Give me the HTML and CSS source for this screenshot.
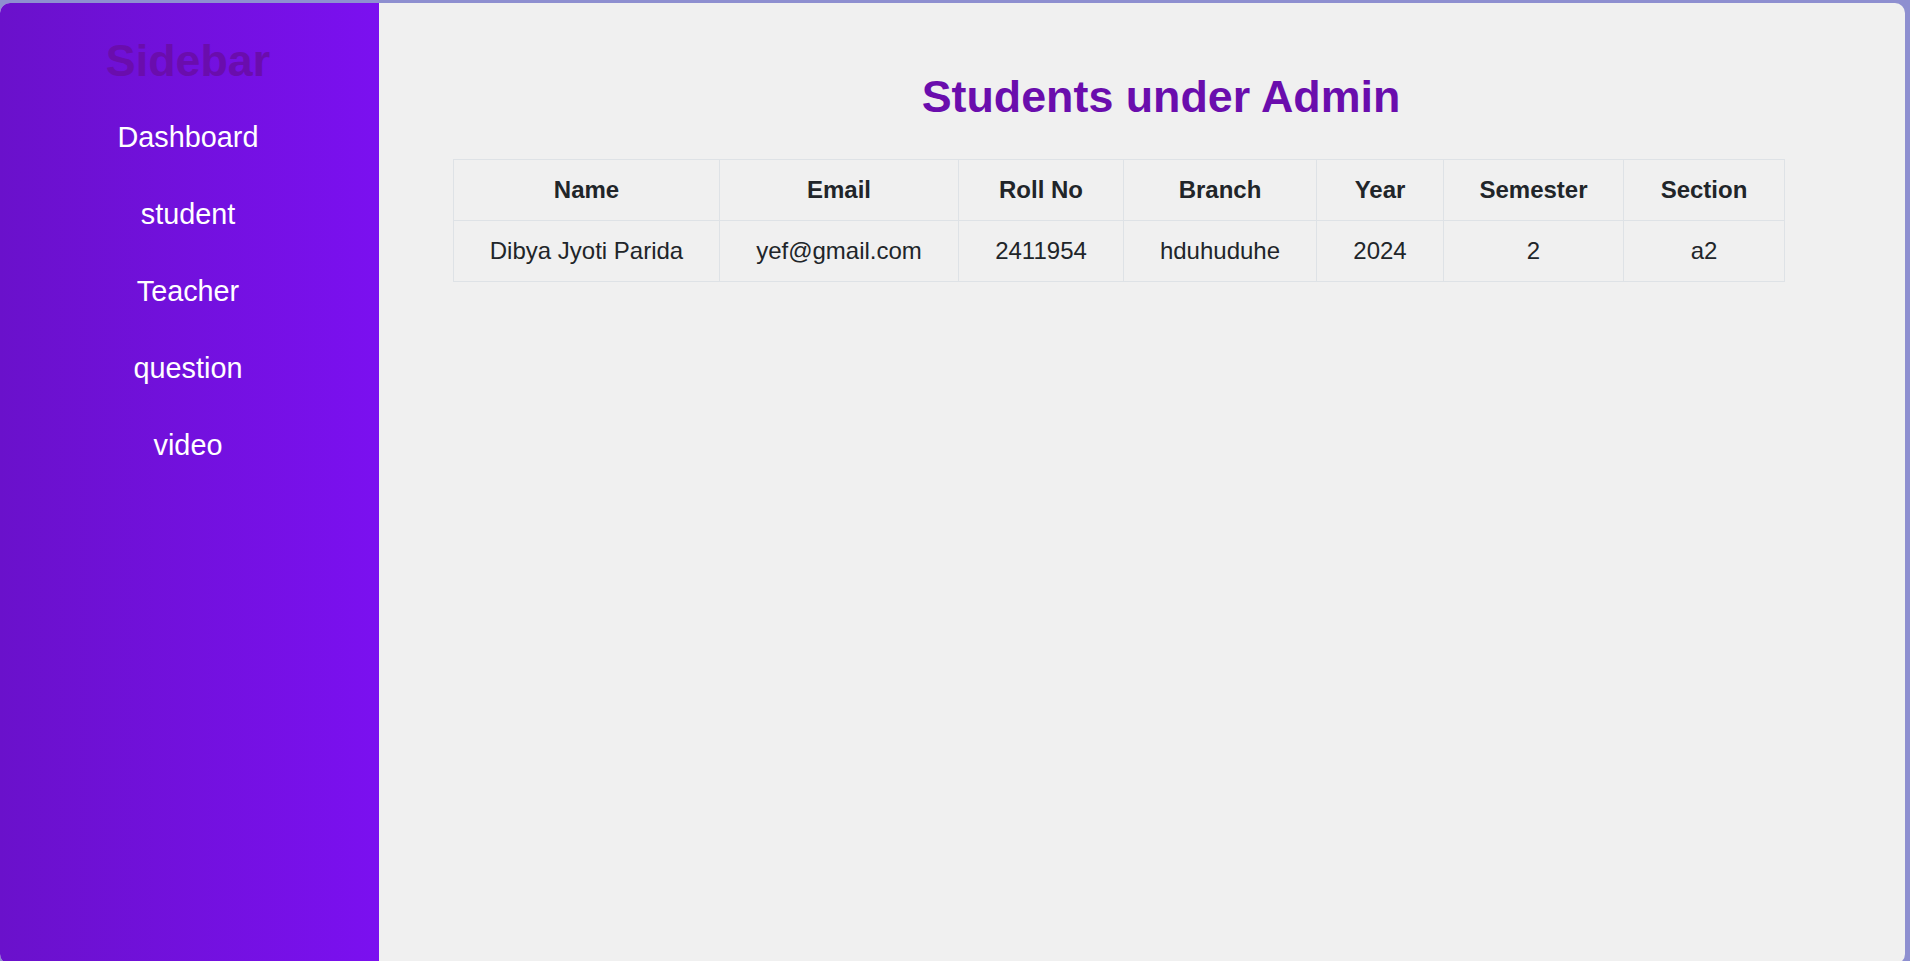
FILE: index.html
```html
<!DOCTYPE html>
<html lang="en">
<head>
<meta charset="utf-8">
<title>Students under Admin</title>
<link rel="stylesheet" href="styles.css">
</head>
<body>
<div class="app">
  <aside class="sidebar">
    <h2 class="sidebar-title">Sidebar</h2>
    <nav class="nav">
      <a class="nav-link" href="#">Dashboard</a>
      <a class="nav-link" href="#">student</a>
      <a class="nav-link" href="#">Teacher</a>
      <a class="nav-link" href="#">question</a>
      <a class="nav-link" href="#">video</a>
    </nav>
  </aside>
  <main class="main">
    <h1 class="page-title">Students under Admin</h1>
    <table class="students">
      <thead>
        <tr>
          <th class="c-name">Name</th>
          <th class="c-email">Email</th>
          <th class="c-roll">Roll No</th>
          <th class="c-branch">Branch</th>
          <th class="c-year">Year</th>
          <th class="c-sem">Semester</th>
          <th class="c-sec">Section</th>
        </tr>
      </thead>
      <tbody>
        <tr>
          <td>Dibya Jyoti Parida</td>
          <td>yef@gmail.com</td>
          <td>2411954</td>
          <td>hduhuduhe</td>
          <td>2024</td>
          <td>2</td>
          <td>a2</td>
        </tr>
      </tbody>
    </table>
  </main>
</div>
</body>
</html>
```

FILE: styles.css
```css
html, body {
  margin: 0;
  padding: 0;
  height: 100%;
}

body {
  background: #8e8fd0;
  font-family: "Liberation Sans", Arial, sans-serif;
  overflow: hidden;
}

.app {
  display: flex;
  margin: 3px 5px 0 0;
  height: 961px;
  border-radius: 10px;
  overflow: hidden;
  background: #f0f0f0;
}

.sidebar {
  width: 379px;
  flex: 0 0 379px;
  background: linear-gradient(to right, #6a11cb, #7b10f0);
  padding: 31px 3px 0 0;
  text-align: center;
  box-sizing: border-box;
}

.sidebar-title {
  margin: 0;
  font-size: 44.8px;
  line-height: 52px;
  font-weight: bold;
  color: #6a0dad;
}

.nav {
  margin-top: 13px;
  display: flex;
  flex-direction: column;
}

.nav-link {
  display: block;
  color: #ffffff;
  text-decoration: none;
  font-size: 28.8px;
  line-height: 33px;
  padding: 22px 0;
}

.main {
  flex: 1;
  min-width: 0;
  padding: 67px 36px 0 74px;
  box-sizing: border-box;
}

.page-title {
  margin: 0;
  text-align: center;
  font-size: 44.8px;
  line-height: 52px;
  font-weight: bold;
  color: #6a0dad;
}

.students {
  margin-top: 37px;
  width: 1331px;
  border-collapse: collapse;
  table-layout: fixed;
  color: #212529;
  font-size: 24px;
}

.students th,
.students td {
  box-sizing: border-box;
  border: 1px solid #dee2e6;
  padding: 16px 4px;
  line-height: 28px;
  text-align: center;
}

.students th {
  font-weight: bold;
}

.c-name { width: 266px; }
.c-email { width: 239px; }
.c-roll { width: 165px; }
.c-branch { width: 193px; }
.c-year { width: 127px; }
.c-sem { width: 180px; }
.c-sec { width: 161px; }
```
